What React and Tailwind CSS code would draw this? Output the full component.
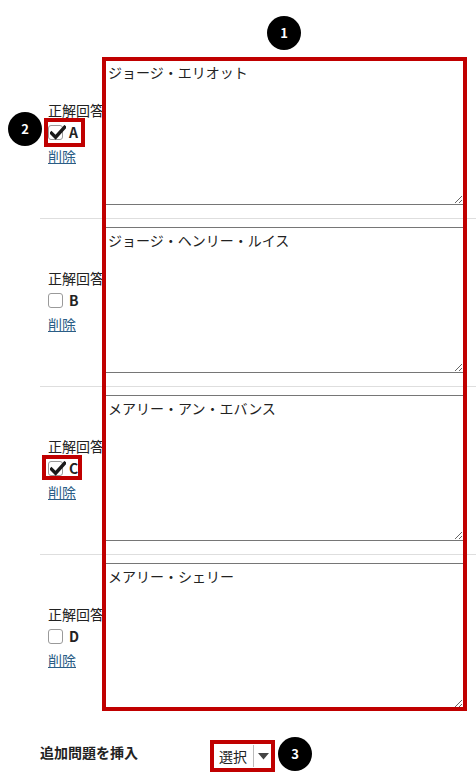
import React from "react";

const FONT = { fontFamily: '"Noto Sans CJK JP", "Noto Sans", sans-serif' };

function Check({ checked }) {
  return (
    <span className="relative inline-block w-[15px] h-[15px] rounded-[3px] border border-[#9a9a9a] bg-white">
      {checked && (
        <svg className="absolute left-[1px] top-[-1px]" width="16" height="15" viewBox="0 0 16 15">
          <path d="M1.5 8.2 L5.6 12.2 L14.5 2.3" fill="none" stroke="#1a1a1a" strokeWidth="3.4" strokeLinecap="square" />
        </svg>
      )}
    </span>
  );
}

function Row({ text, letter, checked, highlight, last }) {
  return (
    <div className={"flex pt-2 pb-[13px] " + (last ? "" : "border-b border-[#dedede]")}>
      <div className="w-[64px] pl-2 pt-[41px] text-sm leading-5 text-[#222] whitespace-nowrap">
        <div>正解回答</div>
        <div className="relative mt-1 flex items-center h-[16px]">
          <Check checked={checked} />
          <span className="ml-[6px] font-bold text-[#222] leading-4">{letter}</span>
          {highlight === "A" && (
            <span className="absolute left-[-4px] top-[-6px] w-[41px] h-[29px] border-4 border-[#c00000]" />
          )}
          {highlight === "C" && (
            <span className="absolute left-[-6px] top-[-5px] w-[40px] h-[25px] border-4 border-[#c00000]" />
          )}
        </div>
        <div className="mt-[6px]">
          <a className="underline text-[#2a5d86] cursor-pointer">削除</a>
        </div>
      </div>
      <textarea
        className="relative w-[360px] h-[146px] border border-[#767676] bg-white px-[3px] py-[2px] text-sm leading-5 text-[#222] outline-none"
        style={FONT}
        defaultValue={text}
      />
    </div>
  );
}

function Badge({ n, className }) {
  return (
    <div className={"absolute w-[34px] h-[34px] rounded-full bg-black text-white flex items-center justify-center text-[13px] font-bold " + className}>
      {n}
    </div>
  );
}

export default function App() {
  return (
    <div className="relative w-[476px] h-[780px] bg-white overflow-hidden" style={FONT}>
      <div className="pt-[51px] pl-[40px]">
        <Row text="ジョージ・エリオット" letter="A" checked highlight="A" />
        <Row text="ジョージ・ヘンリー・ルイス" letter="B" />
        <Row text="メアリー・アン・エバンス" letter="C" checked highlight="C" />
        <Row text="メアリー・シェリー" letter="D" last />
      </div>
      <div className="flex items-start pl-[40px] mt-[18px]">
        <div className="w-[170px] pt-[2px] text-sm leading-5 font-bold text-[#222]">追加問題を挿入</div>
        <div className="w-[65px] h-[32px] border-4 border-[#c00000] flex items-center pl-[5px]">
          <span className="text-sm leading-5 text-[#222]">選択</span>
          <span className="ml-[6px] w-px h-[22px] bg-[#bbbbbb]" />
          <svg className="ml-[4px]" width="11" height="7" viewBox="0 0 11 7">
            <path d="M0 0 L11 0 L5.5 6.5 Z" fill="#444" />
          </svg>
        </div>
      </div>
      <div className="absolute left-[102px] top-[57px] w-[365px] h-[654px] border-4 border-[#c00000] pointer-events-none" />
      <Badge n="1" className="left-[267px] top-[16px]" />
      <Badge n="2" className="left-[8px] top-[112px]" />
      <Badge n="3" className="left-[278px] top-[737px]" />
    </div>
  );
}
